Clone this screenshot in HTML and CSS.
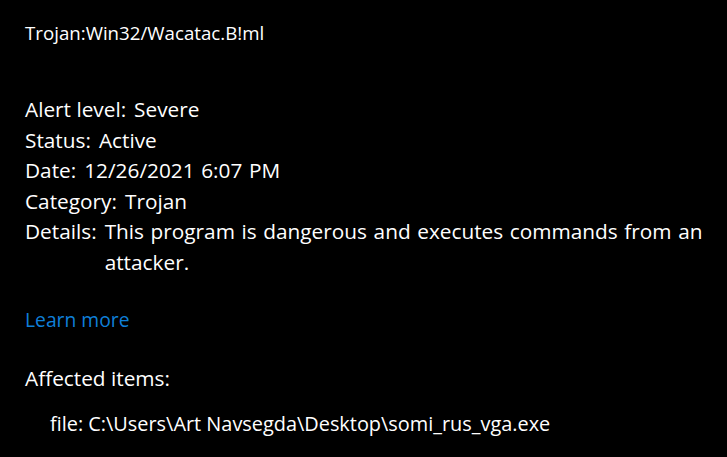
FILE: index.html
```html
<!DOCTYPE html>
<html>
<head>
<meta charset="utf-8">
<link rel="stylesheet" href="styles.css">
</head>
<body>
<div class="page">
  <div class="title">Trojan:Win32/Wacatac.B!ml</div>
  <div class="props">
    <div class="row"><span class="label">Alert level:</span><span class="value">Severe</span></div>
    <div class="row"><span class="label">Status:</span><span class="value">Active</span></div>
    <div class="row"><span class="label">Date:</span><span class="value">12/26/2021 6:07 PM</span></div>
    <div class="row"><span class="label">Category:</span><span class="value">Trojan</span></div>
    <div class="row"><span class="label">Details:</span><span class="value">This program is dangerous and executes commands from an attacker.</span></div>
  </div>
  <a class="link" href="#">Learn more</a>
  <div class="affected">Affected items:</div>
  <div class="file">file: C:\Users\Art Navsegda\Desktop\somi_rus_vga.exe</div>
</div>
</body>
</html>
```
FILE: styles.css
```css
html, body {
  margin: 0;
  padding: 0;
  background: #000;
}
body {
  width: 727px;
  height: 457px;
  overflow: hidden;
  font-family: "Open Sans", "Noto Sans", sans-serif;
  color: #fff;
}
.page {
  padding: 20px 0 0 25px;
  display: flex;
  flex-direction: column;
  align-items: flex-start;
}
.title {
  font-size: 18.7px;
  line-height: 26px;
}
.props {
  margin-top: 48px;
  display: flex;
  flex-direction: column;
  font-size: 20.8px;
  line-height: 30.5px;
  width: 695px;
}
.row {
  display: flex;
}
.label {
  flex: none;
  margin-right: 8px;
}
.value {
  flex: 1;
  word-spacing: 1.2px;
}
.link {
  margin-top: 28px;
  font-size: 19.3px;
  line-height: 30px;
  color: #0f7fd8;
  text-decoration: none;
}
.affected {
  margin-top: 28px;
  font-size: 20.8px;
  line-height: 30px;
}
.file {
  margin-top: 17px;
  margin-left: 25px;
  font-size: 19.9px;
  line-height: 28px;
}
```
